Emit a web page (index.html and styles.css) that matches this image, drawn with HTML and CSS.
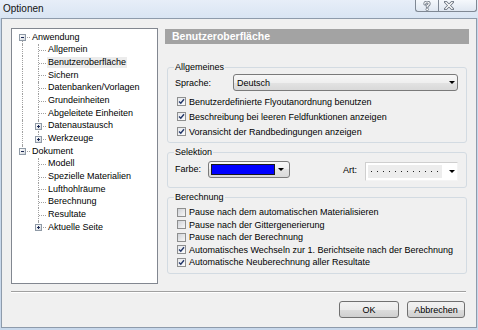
FILE: index.html
```html
<!DOCTYPE html>
<html lang="de">
<head>
  <meta charset="UTF-8">
  <title>Optionen</title>
  <link rel="stylesheet" href="styles.css">
</head>
<body>
  <div class="window">
    <div class="titlebar">
      <span class="title">Optionen</span>
      <div class="caption-buttons">
        <div class="cap-btn help">
          <svg width="8" height="10" viewBox="0 0 8 10">
            <path d="M1.8 3 Q1.8 1 4 1 Q6.2 1 6.2 2.8 Q6.2 4.2 4.2 4.8 L4.2 6" fill="none" stroke="#6d7682" stroke-width="2.8" stroke-linecap="round"/>
            <path d="M1.8 3 Q1.8 1 4 1 Q6.2 1 6.2 2.8 Q6.2 4.2 4.2 4.8 L4.2 6" fill="none" stroke="#fff" stroke-width="1.2" stroke-linecap="round"/>
            <circle cx="4.2" cy="8.4" r="1.3" fill="#fff" stroke="#6d7682" stroke-width="0.8"/>
          </svg>
        </div>
        <div class="cap-btn close">
          <svg width="10" height="9" viewBox="0 0 10 9">
            <path d="M1.5 1 L8.5 8 M8.5 1 L1.5 8" stroke="#6d7682" stroke-width="3" stroke-linecap="square"/>
            <path d="M1.5 1 L8.5 8 M8.5 1 L1.5 8" stroke="#fff" stroke-width="1.3"/>
          </svg>
        </div>
      </div>
    </div>

    <div class="client">
      <div class="content">
        <!-- Baum -->
        <div class="tree">
          <div class="tree-row"><span class="indent node first"><span class="toggle"></span></span><span class="label">Anwendung</span></div>
          <div class="tree-row"><span class="indent pipe"></span><span class="indent node"></span><span class="label">Allgemein</span></div>
          <div class="tree-row"><span class="indent pipe"></span><span class="indent node"></span><span class="label selected">Benutzeroberfläche</span></div>
          <div class="tree-row"><span class="indent pipe"></span><span class="indent node"></span><span class="label">Sichern</span></div>
          <div class="tree-row"><span class="indent pipe"></span><span class="indent node"></span><span class="label">Datenbanken/Vorlagen</span></div>
          <div class="tree-row"><span class="indent pipe"></span><span class="indent node"></span><span class="label">Grundeinheiten</span></div>
          <div class="tree-row"><span class="indent pipe"></span><span class="indent node"></span><span class="label">Abgeleitete Einheiten</span></div>
          <div class="tree-row"><span class="indent pipe"></span><span class="indent node"><span class="toggle plus"></span></span><span class="label">Datenaustausch</span></div>
          <div class="tree-row"><span class="indent pipe"></span><span class="indent node last"><span class="toggle plus"></span></span><span class="label">Werkzeuge</span></div>
          <div class="tree-row"><span class="indent node last"><span class="toggle"></span></span><span class="label">Dokument</span></div>
          <div class="tree-row"><span class="indent"></span><span class="indent node"></span><span class="label">Modell</span></div>
          <div class="tree-row"><span class="indent"></span><span class="indent node"></span><span class="label">Spezielle Materialien</span></div>
          <div class="tree-row"><span class="indent"></span><span class="indent node"></span><span class="label">Lufthohlräume</span></div>
          <div class="tree-row"><span class="indent"></span><span class="indent node"></span><span class="label">Berechnung</span></div>
          <div class="tree-row"><span class="indent"></span><span class="indent node"></span><span class="label">Resultate</span></div>
          <div class="tree-row"><span class="indent"></span><span class="indent node last"><span class="toggle plus"></span></span><span class="label">Aktuelle Seite</span></div>
        </div>

        <!-- Seite -->
        <div class="page">
          <div class="page-header">Benutzeroberfläche</div>

          <fieldset class="group group-general">
            <legend>Allgemeines</legend>
            <div class="field-row">
              <span class="field-label">Sprache:</span>
              <div class="combo combo-lang">
                <span class="combo-value">Deutsch</span>
                <span class="arrow"></span>
              </div>
            </div>
            <div class="check-list">
              <div class="check-row"><span class="check checked"><svg width="7" height="7" viewBox="0 0 7 7"><path d="M1 3.4 L2.8 5.3 L6 1.2" fill="none" stroke="#24386a" stroke-width="1.4"/></svg></span><span>Benutzerdefinierte Flyoutanordnung benutzen</span></div>
              <div class="check-row"><span class="check checked"><svg width="7" height="7" viewBox="0 0 7 7"><path d="M1 3.4 L2.8 5.3 L6 1.2" fill="none" stroke="#24386a" stroke-width="1.4"/></svg></span><span>Beschreibung bei leeren Feldfunktionen anzeigen</span></div>
              <div class="check-row"><span class="check checked"><svg width="7" height="7" viewBox="0 0 7 7"><path d="M1 3.4 L2.8 5.3 L6 1.2" fill="none" stroke="#24386a" stroke-width="1.4"/></svg></span><span>Voransicht der Randbedingungen anzeigen</span></div>
            </div>
          </fieldset>

          <fieldset class="group group-select">
            <legend>Selektion</legend>
            <div class="select-row">
              <span class="field-label farbe">Farbe:</span>
              <div class="combo combo-color">
                <span class="swatch"></span>
                <span class="arrow"></span>
              </div>
              <span class="field-label art">Art:</span>
              <div class="line-box">
                <span class="line-sample"><span class="dots"></span></span>
                <span class="arrow"></span>
              </div>
            </div>
          </fieldset>

          <fieldset class="group group-calc">
            <legend>Berechnung</legend>
            <div class="check-list small">
              <div class="check-row"><span class="check"></span><span>Pause nach dem automatischen Materialisieren</span></div>
              <div class="check-row"><span class="check"></span><span>Pause nach der Gittergenerierung</span></div>
              <div class="check-row"><span class="check"></span><span>Pause nach der Berechnung</span></div>
              <div class="check-row"><span class="check checked"><svg width="7" height="7" viewBox="0 0 7 7"><path d="M1 3.4 L2.8 5.3 L6 1.2" fill="none" stroke="#24386a" stroke-width="1.4"/></svg></span><span>Automatisches Wechseln zur 1. Berichtseite nach der Berechnung</span></div>
              <div class="check-row"><span class="check checked"><svg width="7" height="7" viewBox="0 0 7 7"><path d="M1 3.4 L2.8 5.3 L6 1.2" fill="none" stroke="#24386a" stroke-width="1.4"/></svg></span><span>Automatische Neuberechnung aller Resultate</span></div>
            </div>
          </fieldset>
        </div>
      </div>

      <div class="separator"></div>

      <div class="dialog-buttons">
        <button class="btn btn-ok">OK</button>
        <button class="btn btn-cancel">Abbrechen</button>
      </div>
    </div>
  </div>
</body>
</html>
```

FILE: styles.css
```css
html, body {
  margin: 0;
  padding: 0;
}

body {
  width: 478px;
  height: 330px;
  overflow: hidden;
  background: #c8d8eb;
  font-family: "Liberation Sans", Arial, sans-serif;
  font-size: 9px;
  color: #000;
}

.window {
  height: 330px;
  display: flex;
  flex-direction: column;
}

/* Titelleiste */
.titlebar {
  height: 18px;
  flex: none;
  display: flex;
  align-items: flex-start;
  background: linear-gradient(#e7eef8, #d9e5f3);
}

.title {
  font-size: 10px;
  line-height: 11px;
  padding: 3px 0 0 3px;
  color: #111;
}

.caption-buttons {
  margin-left: auto;
  margin-right: 1px;
  display: flex;
}

.cap-btn {
  height: 12px;
  box-sizing: border-box;
  border: 1px solid #7f8894;
  border-top: none;
  background: linear-gradient(#f5f8fc, #dfe7f1);
  display: flex;
  align-items: center;
}

.cap-btn.help {
  width: 23px;
  border-right: none;
  border-radius: 0 0 0 3px;
  justify-content: center;
}

.cap-btn.close {
  width: 39px;
  border-radius: 0 0 3px 0;
  padding-left: 5px;
  box-sizing: border-box;
}

/* Client-Bereich */
.client {
  flex: 1;
  margin: 0 1px 2px;
  border: 1px solid #8e9bab;
  background: #f0f0f0;
  padding: 9px 7px 0 9px;
  display: flex;
  flex-direction: column;
}

.content {
  display: flex;
  align-items: flex-start;
}

/* Baum */
.tree {
  width: 147px;
  height: 256px;
  flex: none;
  box-sizing: border-box;
  border: 1px solid #828790;
  background: #fff;
  padding: 2px 0 0 2px;
}

.tree-row {
  display: flex;
  align-items: center;
  height: 12.67px;
  white-space: nowrap;
}

.indent {
  width: 16px;
  align-self: stretch;
  flex: none;
  position: relative;
}

.indent.pipe::before,
.indent.node::before {
  content: '';
  position: absolute;
  left: 8px;
  top: 0;
  bottom: 0;
  border-left: 1px dotted #a0a0a0;
}

.indent.node.first::before {
  top: 50%;
}

.indent.node.last::before {
  bottom: 50%;
}

.indent.node::after {
  content: '';
  position: absolute;
  left: 9px;
  right: 0;
  top: 50%;
  border-top: 1px dotted #a0a0a0;
}

.toggle {
  position: absolute;
  z-index: 1;
  left: 5px;
  top: calc(50% - 3px);
  width: 7px;
  height: 7px;
  box-sizing: border-box;
  border: 1px solid #8f9aa6;
  background: linear-gradient(135deg, #ffffff, #d4d8de);
}

.toggle::before {
  content: '';
  position: absolute;
  left: 1px;
  top: 2px;
  width: 3px;
  height: 1px;
  background: #1c2a55;
}

.toggle.plus::after {
  content: '';
  position: absolute;
  left: 2px;
  top: 1px;
  width: 1px;
  height: 3px;
  background: #1c2a55;
}

.label {
  margin-left: 1px;
  padding: 0 1px;
  line-height: 11px;
}

.label.selected {
  background: #ececec;
}

/* Seite rechts */
.page {
  width: 304px;
  margin-left: 7px;
  margin-top: 1px;
}

.page-header {
  height: 15px;
  line-height: 15px;
  background: #a3a3a3;
  color: #fff;
  font-weight: bold;
  font-size: 10.5px;
  padding-left: 7px;
}

.group {
  margin: 0 2px;
  min-width: 0;
  border: 1px solid #d3dbe2;
  border-radius: 3px;
  padding: 0 8px 3px 6px;
}

.group legend {
  padding: 0 1px;
  line-height: 11px;
}

.group-general {
  margin-top: 18px;
}

.group-select {
  margin-top: 4px;
  padding-bottom: 6px;
}

.group-calc {
  margin-top: 4px;
  padding-bottom: 4px;
}

.field-row {
  display: flex;
  align-items: center;
  height: 17px;
  margin-top: 1px;
}

.field-label {
  padding-left: 1px;
}

.combo {
  display: flex;
  align-items: center;
  height: 17px;
  box-sizing: border-box;
  border: 1px solid #7a7a7a;
  border-radius: 3px;
  background: linear-gradient(#f7f7f7 0%, #efefef 50%, #e3e3e3 50%, #d9d9d9 100%);
}

.combo-lang {
  width: 225px;
  margin-left: auto;
}

.combo-value {
  flex: 1;
  padding-left: 3px;
}

.arrow {
  width: 0;
  height: 0;
  border-left: 3px solid transparent;
  border-right: 3px solid transparent;
  border-top: 3px solid #000;
  margin-right: 2px;
}

.check-list {
  margin-top: 3px;
}

.check-row {
  display: flex;
  align-items: center;
  height: 15px;
  padding-left: 3px;
  white-space: nowrap;
}

.check-list.small .check-row {
  height: 12.5px;
}

.check {
  width: 9px;
  height: 9px;
  flex: none;
  box-sizing: border-box;
  border: 1px solid #8e8f8f;
  background: linear-gradient(135deg, #d0d3d8, #f7f7f7);
  margin-right: 3px;
  display: flex;
  align-items: center;
  justify-content: center;
}

.check.checked {
  background: linear-gradient(135deg, #e6e8ec, #fbfbfb);
}

/* Selektion */
.select-row {
  display: flex;
  align-items: flex-start;
  margin-top: 3px;
}

.select-row .field-label {
  line-height: 17px;
}

.field-label.farbe {
  width: 33px;
}

.combo-color {
  width: 82px;
}

.swatch {
  width: 64px;
  height: 11px;
  box-sizing: border-box;
  margin-left: 2px;
  border: 1px solid #1a1a1a;
  background: #0000ff;
}

.combo-color .arrow {
  margin-left: 3px;
}

.field-label.art {
  margin-left: auto;
  width: 22px;
  line-height: 19px;
}

.line-box {
  width: 93px;
  height: 19px;
  margin-top: 1px;
  box-sizing: border-box;
  border: 1px solid;
  border-color: #cfcfcf #f4f4f4 #f4f4f4 #cfcfcf;
  background: #fff;
  display: flex;
  align-items: center;
}

.line-sample {
  width: 74px;
  height: 13px;
  margin-left: 2px;
  box-sizing: border-box;
  padding: 0 3px;
  background: #ededed;
  display: flex;
  align-items: center;
}

.dots {
  flex: 1;
  height: 1px;
  background: repeating-linear-gradient(90deg, #222 0 1px, transparent 1px 6px);
}

.line-box .arrow {
  margin-left: auto;
}

/* unten */
.separator {
  margin-top: 7px;
  margin-right: 3px;
  border-top: 1px solid #a0a0a0;
  border-bottom: 1px solid #fff;
}

.dialog-buttons {
  display: flex;
  justify-content: flex-end;
  gap: 8px;
  margin-top: 8px;
  margin-right: 4px;
}

.btn {
  height: 17px;
  padding: 0;
  box-sizing: border-box;
  border: 1px solid #707070;
  border-radius: 3px;
  background: linear-gradient(#f2f2f2 0%, #ebebeb 50%, #dddddd 50%, #cfcfcf 100%);
  font-family: "Liberation Sans", Arial, sans-serif;
  font-size: 9px;
  color: #000;
}

.btn-ok {
  width: 60px;
}

.btn-cancel {
  width: 58px;
}
```
